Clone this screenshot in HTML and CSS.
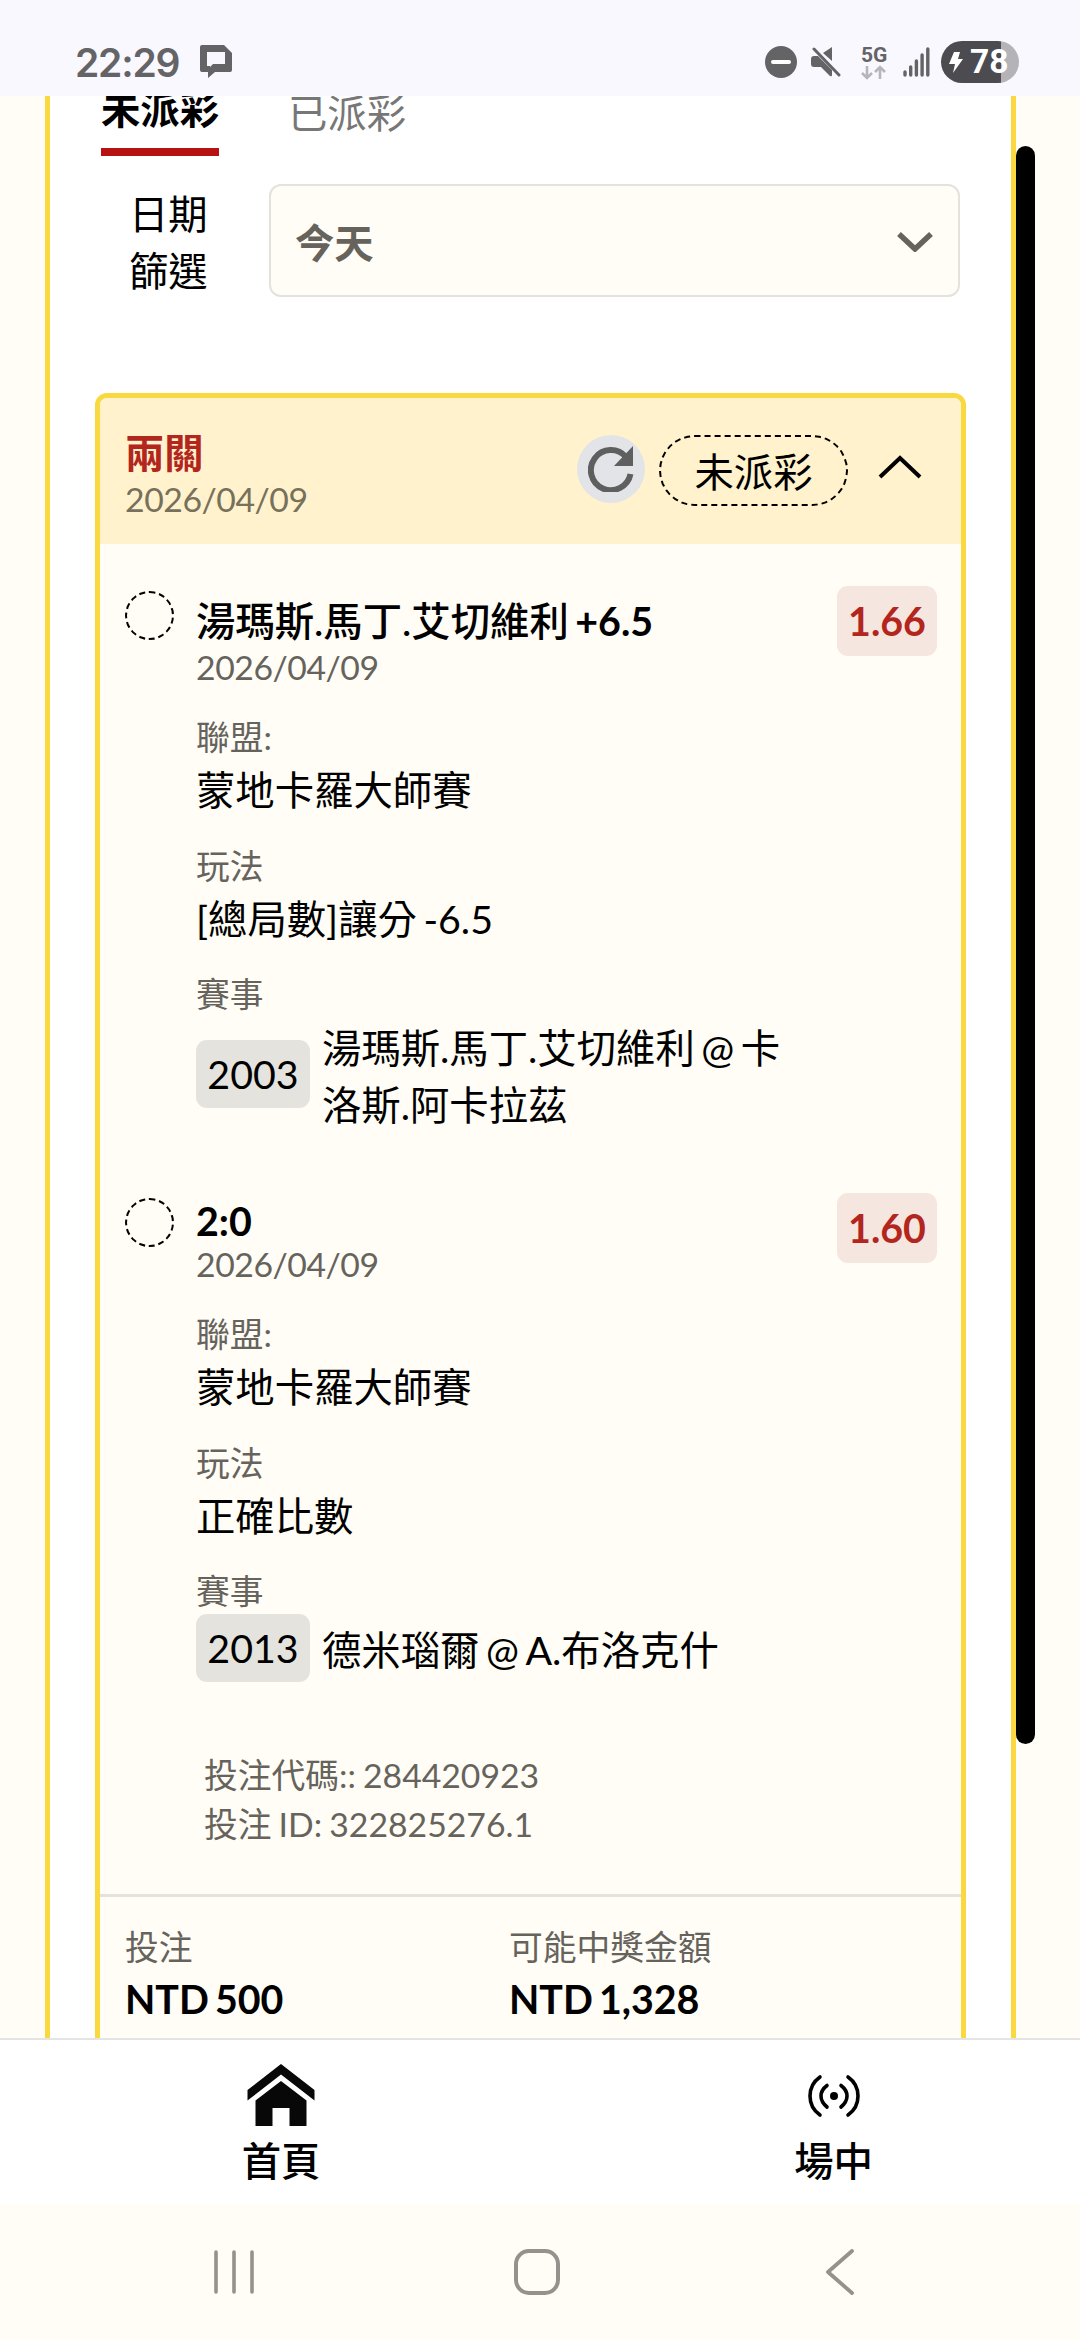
FILE: index.html
```html
<!DOCTYPE html>
<html lang="zh-Hant">
<head>
<meta charset="utf-8">
<title>投注紀錄</title>
<link rel="stylesheet" href="styles.css">
</head>
<body>
<div class="status">
  <span class="clock">22:29</span>
  <svg class="chat" width="32" height="34" viewBox="0 0 32 34"><path fill="#646467" fill-rule="evenodd" d="M2 0H24L32 8V25Q32 27 30 27H15L8 33V27H2Q0 27 0 25V2Q0 0 2 0ZM7 7V21H10V22L13 19H25V7Z"/></svg>
  <div class="status-icons">
    <svg class="dnd" width="32" height="32" viewBox="0 0 32 32"><circle cx="16" cy="16" r="16" fill="#646467"/><path d="M8 16H24" stroke="#fff" stroke-width="4" stroke-linecap="round"/></svg>
    <svg class="mute" width="30" height="32" viewBox="0 0 30 32"><path fill="#646467" d="M0 13Q0 10 3 10H7L21 24V29Q21 31 19 30L10 21H3Q0 21 0 18ZM12 7L21 1V15Z"/><path d="M3 3L28 29" stroke="#646467" stroke-width="3" stroke-linecap="round"/></svg>
    <div class="network">
      <span class="gen">5G</span>
      <svg width="26" height="15" viewBox="0 0 26 15"><path d="M6 1V13M1 8L6 13L11 8M19 14V2M14 7L19 2L24 7" fill="none" stroke="#b5b5ba" stroke-width="2.6"/></svg>
    </div>
    <svg class="signal" width="27" height="30" viewBox="0 0 27 30"><path d="M2 25V28M7.7 20V28M13.4 14V28M19.1 8V28M24.8 2V28" stroke="#646467" stroke-width="3.4" stroke-linecap="round"/></svg>
    <div class="battery"><svg width="14" height="21" viewBox="0 0 14 21"><path fill="#fff" d="M5 0H11L9 7H14L4 21L6 12H0Z"/></svg>78</div>
  </div>
</div>

<main class="viewport">
  <section class="panel">
    <div class="tabs">
      <div class="tab active">未派彩</div>
      <div class="tab">已派彩</div>
    </div>
    <div class="filter">
      <div class="filter-label">日期篩選</div>
      <div class="select">今天<svg width="36" height="20" viewBox="0 0 36 20"><path d="M2 2L18 17L34 2" fill="none" stroke="#66635d" stroke-width="5.5"/></svg></div>
    </div>
    <article class="card">
      <header class="card-head">
        <div class="head-text">
          <div class="kind">兩關</div>
          <div class="muted date">2026/04/09</div>
        </div>
        <div class="refresh"><svg width="46" height="46" viewBox="0 0 46 46"><path d="M38 11A20 20 0 1 0 42.500 28" fill="none" stroke="#5f5f5f" stroke-width="6"/><path fill="#5f5f5f" d="M45 0V20H26Z"/></svg></div>
        <div class="pill">未派彩</div>
        <svg class="chev" width="44" height="24" viewBox="0 0 44 24"><path d="M2 22L22 3L42 22" fill="none" stroke="#000" stroke-width="4"/></svg>
      </header>

      <div class="pick">
        <i class="ring"></i>
        <div class="info">
          <div class="title">湯瑪斯.馬丁.艾切維利 <b>+6.5</b></div>
          <div class="muted date">2026/04/09</div>
          <div class="field"><div class="muted">聯盟:</div><div class="value">蒙地卡羅大師賽</div></div>
          <div class="field"><div class="muted">玩法</div><div class="value">[總局數]讓分 -6.5</div></div>
          <div class="field"><div class="muted">賽事</div><div class="match"><span class="num">2003</span><span>湯瑪斯.馬丁.艾切維利 @ 卡洛斯.阿卡拉茲</span></div></div>
        </div>
        <div class="odds">1.66</div>
      </div>

      <div class="pick second">
        <i class="ring"></i>
        <div class="info">
          <div class="title"><b>2:0</b></div>
          <div class="muted date">2026/04/09</div>
          <div class="field"><div class="muted">聯盟:</div><div class="value">蒙地卡羅大師賽</div></div>
          <div class="field"><div class="muted">玩法</div><div class="value">正確比數</div></div>
          <div class="field"><div class="muted">賽事</div><div class="match"><span class="num">2013</span><span>德米瑙爾 @ A.布洛克什</span></div></div>
        </div>
        <div class="odds">1.60</div>
      </div>

      <div class="codes muted">
        <div>投注代碼:: 284420923</div>
        <div>投注 ID: 322825276.1</div>
      </div>

      <footer class="totals">
        <div><div class="muted">投注</div><div class="amount">NTD 500</div></div>
        <div><div class="muted">可能中獎金額</div><div class="amount">NTD 1,328</div></div>
      </footer>
    </article>
  </section>
  <div class="scrollbar"></div>
</main>

<nav class="nav">
  <div class="nav-item">
    <svg width="68" height="62" viewBox="0 0 68 62"><path fill="#080808" d="M34 0L67.500 26V36.500L34 10.500L.5 36.500V26ZM34 17L59.500 36.500V62H42.500V44H25.500V62H8.500V36.500Z"/></svg>
    <span>首頁</span>
  </div>
  <div class="nav-item live">
    <svg width="68" height="62" viewBox="0 0 68 62"><g fill="none" stroke="#000" stroke-width="3.600" stroke-linecap="round"><path d="M20 13Q10 20 10 32T20 51M48 13Q58 20 58 32T48 51M27 21.500Q21 26 21 32T27 43M41 21.500Q47 26 47 32T41 43"/></g><circle cx="34" cy="32" r="4"/></svg>
    <span>場中</span>
  </div>
</nav>

<div class="system">
  <svg width="44" height="46" viewBox="0 0 44 46"><path d="M4 3V43M22 3V43M40 3V43" stroke="#94928c" stroke-width="3.600" stroke-linecap="round"/></svg>
  <svg class="home-key" width="46" height="46" viewBox="0 0 46 46"><rect x="2" y="2" width="42" height="42" rx="13" fill="none" stroke="#94928c" stroke-width="4"/></svg>
  <svg width="30" height="46" viewBox="0 0 30 46"><path d="M27 2L3 23L27 44" fill="none" stroke="#94928c" stroke-width="3.800" stroke-linecap="round" stroke-linejoin="round"/></svg>
</div>
</body>
</html>
```
FILE: styles.css
```css
* { box-sizing: border-box; }
body {
  margin: 0;
  width: 1080px;
  height: 2340px;
  overflow: hidden;
  display: flex;
  flex-direction: column;
  background: #fffdf5;
  color: #000;
  font-family: Lato, "Noto Sans CJK TC", sans-serif;
  font-size: 39.375px;
}
svg { display: block; flex: none; }

.status {
  flex: none;
  height: 96px;
  background: #f9f8ff;
  display: flex;
  align-items: center;
  padding: 28px 61px 0 75px;
  color: #646467;
}
.clock { font-family: Inter, sans-serif; font-weight: 600; font-size: 39px; width: 125px; letter-spacing: -1.2px; }
.status-icons { display: flex; align-items: center; margin-left: auto; }
.mute { margin-left: 14px; }
.network { margin-left: 20px; width: 28px; }
.gen { display: block; font: 700 21px/20px Roboto, sans-serif; }
.signal { margin-left: 14px; }
.battery {
  margin-left: 11px;
  width: 78px;
  height: 42px;
  border-radius: 21px;
  background: linear-gradient(90deg, #4c4c50 0 60px, #b3b3b8 60px);
  color: #fff;
  font: 700 33.500px/42px Roboto, sans-serif;
  display: flex;
  align-items: center;
  gap: 7px;
  padding-left: 8px;
}

.viewport { position: relative; flex: none; height: 1942px; overflow: hidden; }
.panel {
  margin: 0 64px 0 45px;
  padding: 0 45px 0 45px;
  height: 2100px;
  background: #fff;
  border: solid #f9d840;
  border-width: 0 5px;
}
.scrollbar {
  position: absolute;
  top: 50px;
  left: 1016px;
  width: 19px;
  height: 1598px;
  border-radius: 10px;
  background: #000;
}

.tabs { display: flex; height: 60px; margin-left: 6px; gap: 69px; white-space: nowrap; }
.tab { width: 118px; color: #777; margin-top: -14px; }
.tab.active { color: #000; font-weight: 700; margin-top: -18px; border-bottom: 8px solid #b71212; }

.filter { display: flex; margin-top: 28px; height: 113px; }
.filter-label { width: 81px; margin: 2px 59px 0 34px; line-height: 56.500px; }
.select {
  flex: none;
  width: 691px;
  border: 2px solid #e4e2dc;
  border-radius: 12px;
  background: #fffdf5;
  color: #66635d;
  font-weight: 700;
  display: flex;
  align-items: center;
  justify-content: space-between;
  padding: 0 25px 1px 24px;
}
.select svg { margin-top: 3px; }

.card {
  margin-top: 96px;
  width: 871px;
  height: 1800px;
  border: 5px solid #f9d840;
  border-radius: 12px;
  background: #fffdf5;
  overflow: hidden;
  word-spacing: -.09em;
}
.card-head {
  height: 146px;
  background: #fff2cc;
  display: flex;
  align-items: flex-start;
  padding: 24px 39px 0 25px;
}
.head-text { margin-right: auto; }
.kind { color: #b3261e; font-weight: 700; }
.muted { color: #66635d; font-size: 33.750px; }
.date { letter-spacing: -.45px; }
.card-head .muted { color: #77705a; }
.refresh {
  margin: 13px 14px 0 0;
  width: 68px;
  height: 68px;
  border-radius: 50%;
  background: #e3e4e8;
  display: grid;
  place-items: center;
}
.pill {
  margin-top: 13px;
  width: 189px;
  height: 71px;
  border: 2px dashed #000;
  border-radius: 36px;
  padding-top: 4px;
  text-align: center;
}
.chev { margin: 33px 0 0 30px; }

.pick { display: flex; align-items: flex-start; padding: 42px 24px 0 25px; }
.second { padding-top: 62px; }
.ring { flex: none; width: 49px; height: 49px; margin: 5px 22px 0 0; border: 2px dashed #000; border-radius: 50%; }
.info { margin-top: 4px; width: 606px; }
.title { font-weight: 500; }
.field { margin-top: 22.500px; }
.date + .field { margin-top: 24px; }
.value { margin-top: -1px; padding-bottom: 1px; }
.match { display: flex; align-items: center; gap: 12px; }
.num { flex: none; width: 114px; height: 67.500px; line-height: 67.500px; border-radius: 11px; background: #e5e3dd; text-align: center; }
.odds {
  margin-left: auto;
  width: 100px;
  height: 70px;
  line-height: 70px;
  border-radius: 11px;
  background: #f6e6e0;
  color: #b3261e;
  font-weight: 700;
  text-align: center;
}
.codes { padding: 67px 0 47px 104px; word-spacing: -.045em; }
.totals {
  border-top: 3px solid #e4e2dc;
  padding: 24px 0 0 25px;
  display: grid;
  grid-template-columns: 384px 1fr;
}
.amount { margin-top: 5px; font-weight: 700; }

.nav {
  flex: none;
  height: 166px;
  border-top: 2px solid #e4e4e4;
  background: #fff;
  display: grid;
  grid-template-columns: 562px 1fr;
}
.nav-item {
  display: flex;
  flex-direction: column;
  align-items: center;
  padding-top: 24px;
  font-weight: 500;
}
.nav-item span { margin-top: 4px; }
.live { padding-left: 25px; }

.system {
  flex: 1;
  display: flex;
  justify-content: space-between;
  align-items: center;
  padding: 0 225px 0 212px;
}
.home-key { margin-right: 8px; }
```
